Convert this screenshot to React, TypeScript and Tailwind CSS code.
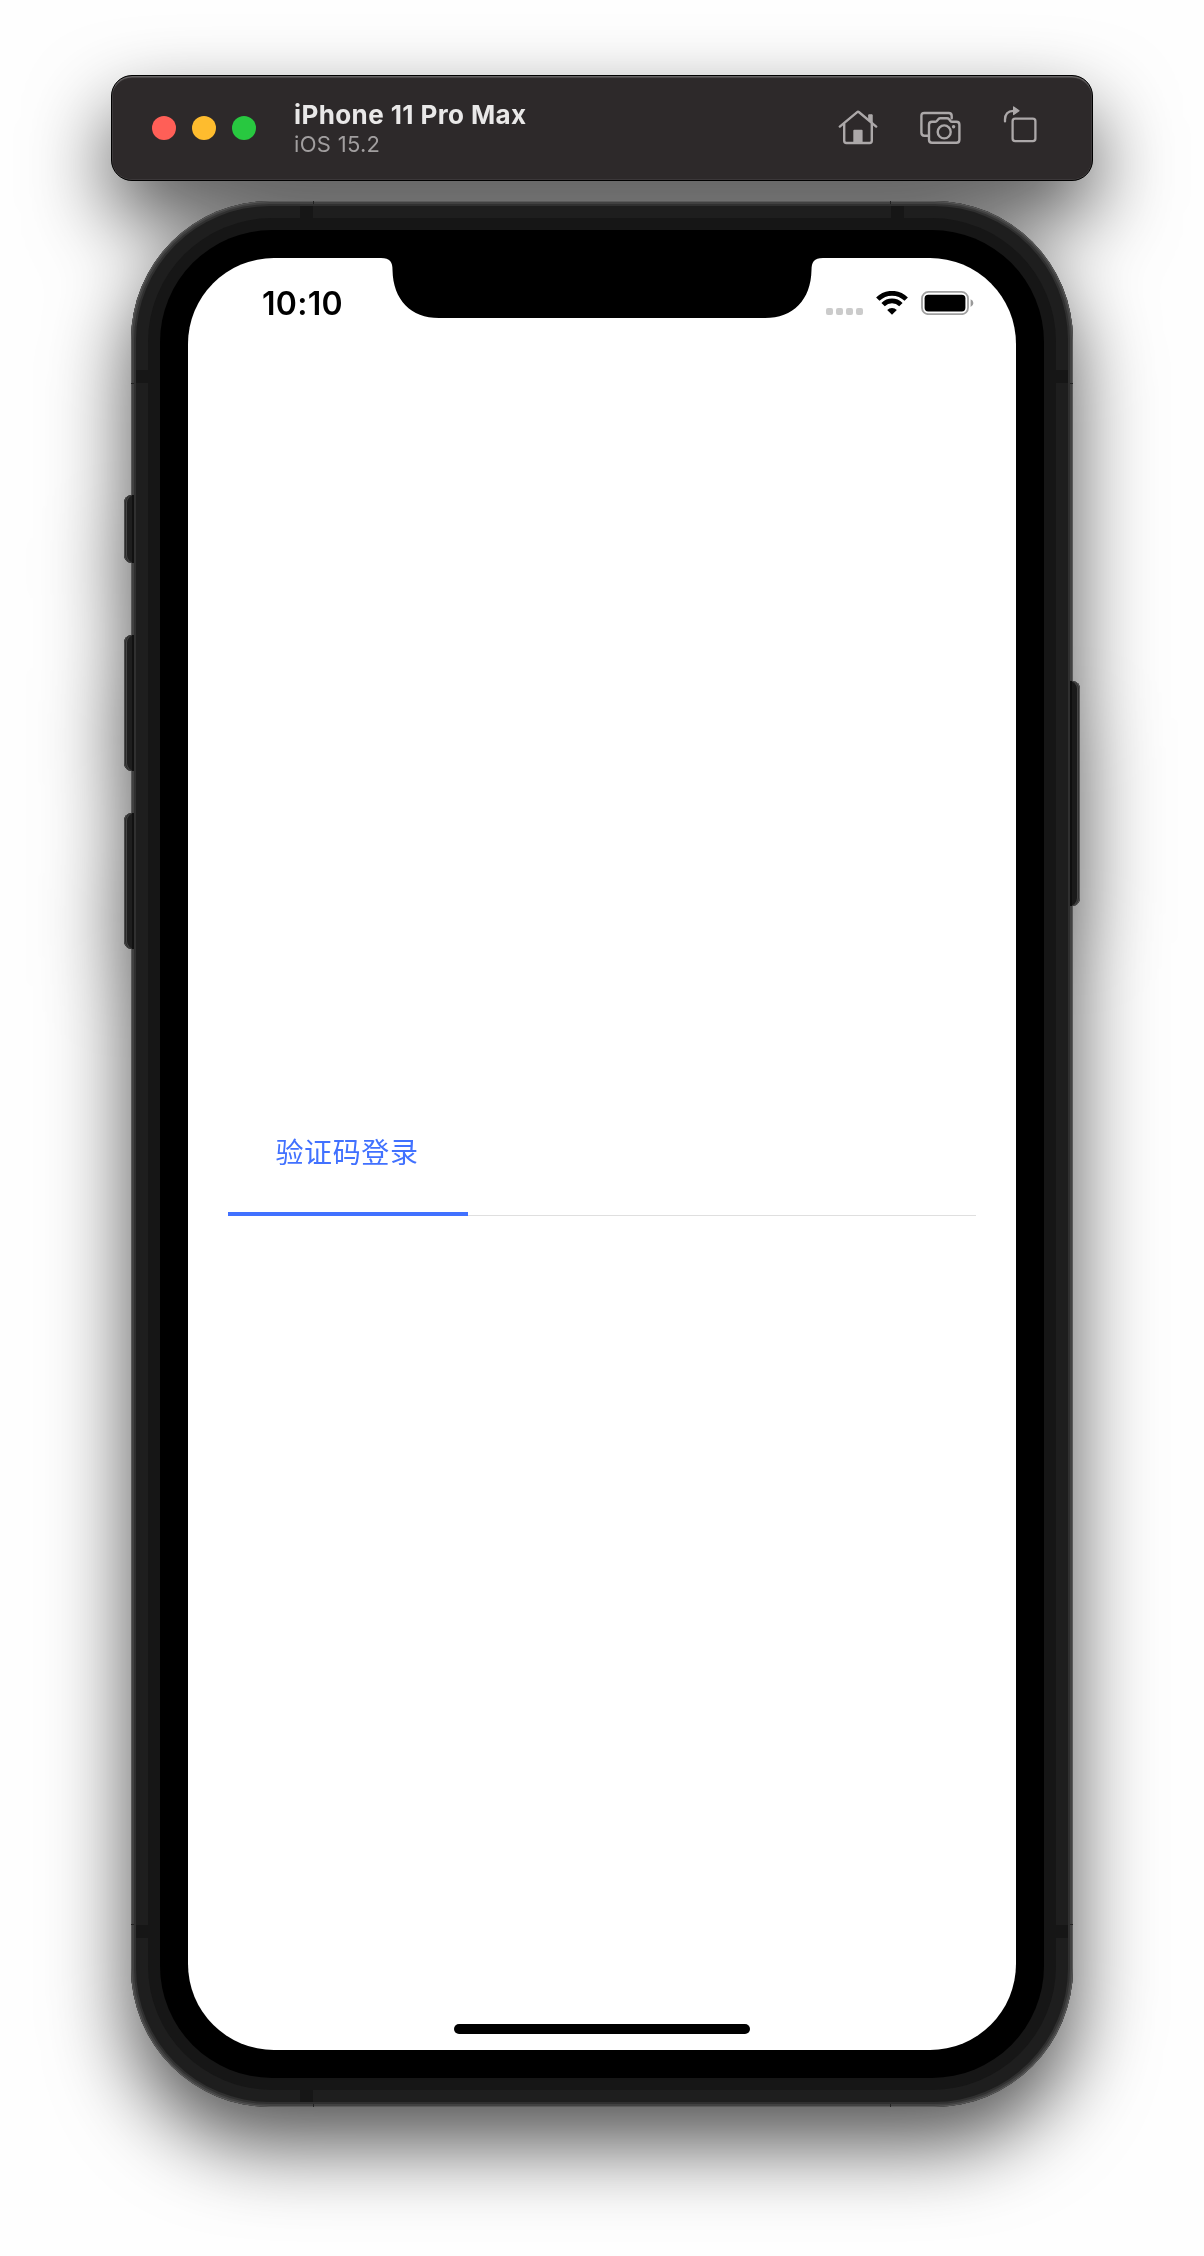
const TRAFFIC_LIGHTS = ["bg-[#ff5f57]", "bg-[#febc2e]", "bg-[#28c840]"];

function HomeIcon() {
  return (
    <svg width="40" height="36" viewBox="0 0 40 36" fill="none" stroke="#aca8a9" strokeWidth="2.4" strokeLinecap="round" strokeLinejoin="round">
      <path d="M1.8 16.6 18.9 2.3Q20 1.4 21.1 2.3L38.2 16.6" />
      <path d="M6.2 14v16.8q0 2.2 2.2 2.2h23.2q2.2 0 2.2-2.2V14" />
      <path d="M31 4.8h3.2v8l-3.2-2.8z" fill="#aca8a9" strokeWidth="1" />
      <path d="M16.3 19.8h7.3q1 0 1 1v12h-9.3v-12q0-1 1-1z" fill="#aca8a9" stroke="none" />
    </svg>
  );
}

function CameraIcon() {
  return (
    <svg width="42" height="34" viewBox="0 0 42 34" fill="none" stroke="#aca8a9" strokeWidth="2.4" strokeLinecap="round" strokeLinejoin="round">
      <path d="M9 24.7H5.4q-3-.1-3-3V5q0-3 3-3h24.3q3 0 3 3v2.2" />
      <path d="M13 10.7h3.4q1 0 1.6-.8l1.3-1.7q.8-.9 2-.9h6.8q1.2 0 2 .9l1.3 1.7q.6.8 1.6.8h4.4q3 0 3 3v15q0 3-3 3H13q-3 0-3-3v-15q0-3 3-3z" />
      <circle cx="25.2" cy="20.9" r="6.5" />
      <circle cx="34.6" cy="15.8" r="1.7" fill="#aca8a9" stroke="none" />
    </svg>
  );
}

function RotateIcon() {
  return (
    <svg width="36" height="40" viewBox="0 0 36 40" fill="none" stroke="#aca8a9" strokeWidth="2.3" strokeLinecap="round" strokeLinejoin="round">
      <path d="M2 16.4V14.6Q2 6.2 10.5 5.8" />
      <path d="M10.6 1.9v7.7l5.4-3.9z" fill="#aca8a9" strokeWidth="1.2" />
      <rect x="9.6" y="13.6" width="22.8" height="22.6" rx="2.6" />
    </svg>
  );
}

function Toolbar() {
  return (
    <header className="flex h-[106px] w-[982px] items-center rounded-[21px] border border-black bg-[#2d292a] pl-10 shadow-[inset_0_2px_1px_-0.5px_#696667,inset_0_0_0_0.5px_#4a4748]">
      <div className="flex gap-4">
        {TRAFFIC_LIGHTS.map((color) => (
          <span key={color} className={`size-6 rounded-full ${color}`} />
        ))}
      </div>
      <div className="ml-[38px] flex-1 pt-px whitespace-nowrap">
        <h1 className="text-[26px] leading-[32px] font-bold tracking-[0.4px] text-[#e9e8e8]">iPhone 11 Pro Max</h1>
        <p className="-mt-px text-[22px] leading-[28px] tracking-[0.3px] text-[#a19e9f]">iOS 15.2</p>
      </div>
      <div className="flex items-center pr-[53px]">
        <HomeIcon />
        <div className="ml-[41px]">
          <CameraIcon />
        </div>
        <div className="-mt-[7px] ml-[42px]">
          <RotateIcon />
        </div>
      </div>
    </header>
  );
}

function StatusBar() {
  return (
    <div className="flex h-[91px] items-center justify-between pr-[42px] pl-[74px]">
      <time className="pt-px text-[32px] leading-none font-semibold tracking-[0.3px] text-black">10:10</time>
      <div className="mb-px flex h-6 items-end">
        <div className="flex gap-[3px]">
          {[0, 1, 2, 3].map((dot) => (
            <span key={dot} className="size-[7px] rounded-[2px] bg-[#cbcbcb]" />
          ))}
        </div>
        <svg className="ml-[13px]" width="32" height="24" viewBox="0 0 32 24" fill="none" stroke="#000">
          <path d="M1.8 8.1a20.2 20.2 0 0 1 28.4 0" strokeWidth="4.8" />
          <path d="M7.1 13.6a12.7 12.7 0 0 1 17.8 0" strokeWidth="4.8" />
          <path d="M16 23.8l-4.8-4.8a6.8 6.8 0 0 1 9.6 0z" fill="#000" stroke="none" />
        </svg>
        <svg className="ml-[13px]" width="53" height="24" viewBox="0 0 53 24">
          <rect x="1" y="0.9" width="46" height="22.3" rx="6.5" fill="none" stroke="#a0a0a0" strokeWidth="1.8" />
          <rect x="3.6" y="3.7" width="40.8" height="16.7" rx="3.6" fill="#000" />
          <path d="M49.6 8.2q2.8 1.2 2.8 3.9t-2.8 3.9z" fill="#999" />
        </svg>
      </div>
    </div>
  );
}

function Notch() {
  return (
    <svg className="absolute top-0 left-[193px]" width="442" height="60" viewBox="0 0 442 60">
      <path d="M0 0C9 0 11.5 4 11.5 12C12 42 30 60 58 60H384C412 60 430 42 430.5 12C430.5 4 433 0 442 0z" fill="#000" />
    </svg>
  );
}

function Screen() {
  return (
    <main className="relative flex h-[1792px] w-[828px] flex-col overflow-hidden rounded-[86px] bg-white">
      <StatusBar />
      <Notch />
      <nav className="mx-10 mt-[747px] flex h-[120px] border-b border-[#dfdfdf]">
        <button className="-mb-px w-[240px] border-b-4 border-[#4171ff] pr-[2px] pb-[2px] text-[28px] tracking-[0.6px] text-[#4171ff]">
          验证码登录
        </button>
      </nav>
      <div className="mt-auto mb-4 h-[10px] w-[296px] self-center rounded-full bg-black" />
    </main>
  );
}

const LEFT_BUTTONS = [
  "top-[294px] h-[68px]",
  "top-[434px] h-[136px]",
  "top-[612px] h-[136px]",
];

const ANTENNAS = [
  "top-[5px] left-[169px] h-3 w-[13px]",
  "top-[5px] left-[760px] h-3 w-[13px]",
  "bottom-[5px] left-[169px] h-3 w-[13px]",
  "top-[169px] left-[5px] h-[13px] w-3",
  "top-[169px] right-[5px] h-[13px] w-3",
  "top-[1724px] left-[5px] h-[13px] w-3",
  "top-[1724px] right-[5px] h-[13px] w-3",
];

const SEAMS = [
  "top-0 left-[182px] h-[3px] w-px",
  "top-0 left-[759px] h-[3px] w-px",
  "bottom-0 left-[182px] h-[3px] w-px",
  "bottom-0 left-[759px] h-[3px] w-px",
  "top-[182px] left-0 h-px w-[3px]",
  "top-[182px] right-0 h-px w-[3px]",
  "top-[1723px] left-0 h-px w-[3px]",
  "top-[1723px] right-0 h-px w-[3px]",
];

function Phone() {
  return (
    <div className="relative mt-5">
      <div className="rounded-[139px] bg-[#1e1e1e] p-[17px] shadow-[inset_0_0_0_1px_#5a5a5a,inset_0_0_0_3px_#414141,inset_0_0_0_5px_#303030]">
        {ANTENNAS.map((place) => (
          <span key={place} className={`absolute bg-[#161616] ${place}`} />
        ))}
        {SEAMS.map((place) => (
          <span key={place} className={`absolute bg-[#222] ${place}`} />
        ))}
        <div className="rounded-[124px] bg-[#161616] p-3">
          <div className="rounded-[112px] bg-black p-7">
            <Screen />
          </div>
        </div>
      </div>
      {LEFT_BUTTONS.map((place) => (
        <span
          key={place}
          className={`absolute -left-[7px] w-[10px] rounded-l-[8px] border-r-2 border-[#111] bg-[#1e1e1e] shadow-[inset_1px_0_0_#4b4b4b,inset_2px_0_0_#2a2a2a,inset_3px_0_0_#454545] ${place}`}
        />
      ))}
      <span className="absolute top-[480px] -right-[7px] h-[225px] w-[10px] rounded-r-[8px] border-l-2 border-[#0e0e0e] bg-[#1a1a1a] shadow-[inset_-1px_0_0_#5a5a5a,inset_-2px_0_0_#333,inset_-3px_0_0_#444]" />
    </div>
  );
}

export default function App() {
  return (
    <div className="h-[2256px] w-[1204px] overflow-hidden bg-[#fefefe] font-['Inter','Noto_Sans_CJK_SC',sans-serif]">
      <div className="flex flex-col items-center pt-[75px] drop-shadow-[0_37px_41px_rgba(0,0,0,0.68)]">
        <Toolbar />
        <Phone />
      </div>
    </div>
  );
}
